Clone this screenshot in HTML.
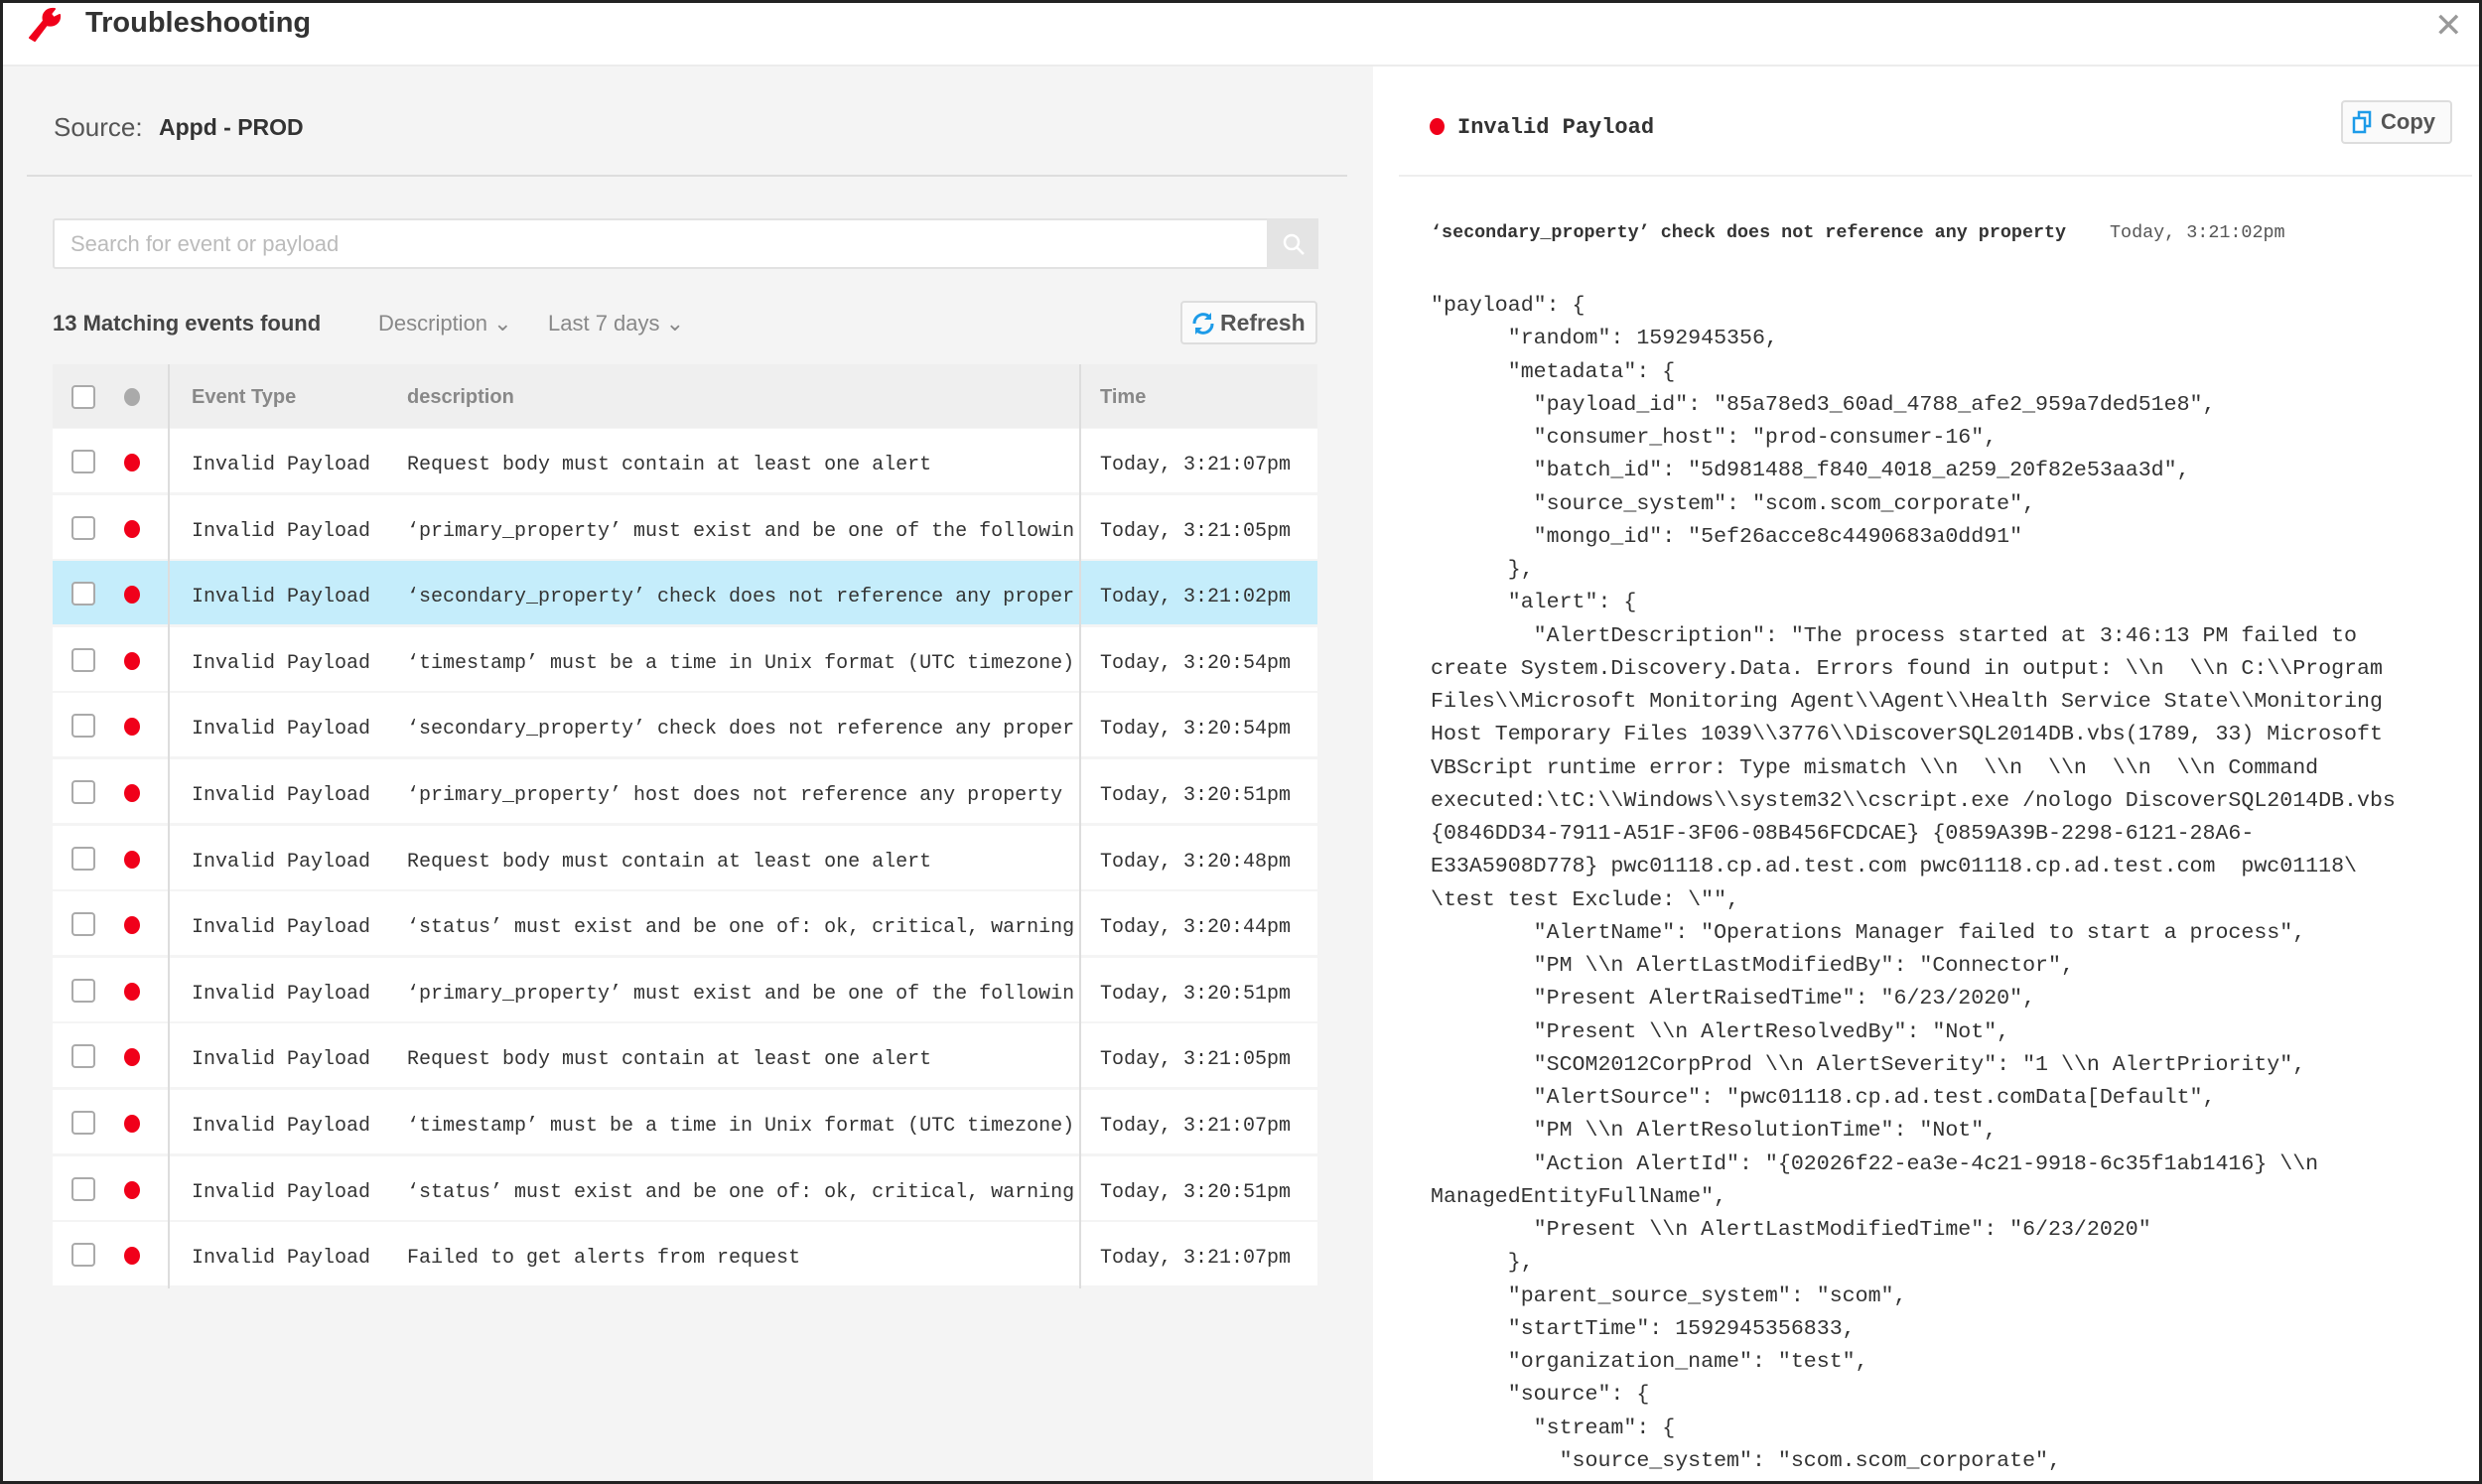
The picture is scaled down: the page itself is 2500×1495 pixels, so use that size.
<!DOCTYPE html>
<html><head><meta charset="utf-8"><style>
*{margin:0;padding:0;box-sizing:border-box}
body{width:2500px;height:1495px;position:relative;overflow:hidden;background:#fff;font-family:"Liberation Sans",sans-serif;color:#333}
.frame{position:absolute;left:0;top:0;width:2500px;height:1495px;border:3px solid #222;pointer-events:none;z-index:10}
.a{position:absolute;white-space:pre}
.mono{font-family:"Liberation Mono",monospace}
.hdr{position:absolute;left:0;top:0;width:2500px;height:67px;border-bottom:2px solid #ececec;background:#fff}
.left{position:absolute;left:0;top:67px;width:1383px;height:1428px;background:#f4f4f4}
.row{position:absolute;left:53px;width:1274px;height:64px;background:#fff}
.cb{position:absolute;left:72px;width:24px;height:24px;border:2px solid #aaa;border-radius:4px;background:#fff}
.dot{position:absolute;width:16px;height:18px;border-radius:50%;background:#f0001a}
.cell{position:absolute;font-family:"Liberation Mono",monospace;font-size:20px;color:#333;white-space:pre;overflow:hidden}
pre{font-family:"Liberation Mono",monospace;font-size:21.6px;line-height:33.25px;color:#333}
</style></head><body>
<div class="hdr"></div>
<svg class="a" style="left:26px;top:6px" width="40" height="36" viewBox="0 0 40 36"><path d="M4 32 L18 15 C16 8 21 2 29 3 L25 8 L28 12 L34 9 C35 17 28 21 21 19 L9 35 Z" fill="#f0001a" stroke="#f0001a" stroke-width="2" stroke-linejoin="round"/></svg>
<div class="a" style="left:86px;top:7px;font-size:29px;font-weight:bold;color:#333">Troubleshooting</div>
<div class="a" style="left:2452px;top:6px;font-size:34px;color:#999;font-weight:300">✕</div>
<div class="left"></div>
<div class="a" style="left:54px;top:113px;font-size:26px;color:#555">Source:</div>
<div class="a" style="left:160px;top:115px;font-size:23px;font-weight:bold;color:#333">Appd - PROD</div>
<div class="a" style="left:27px;top:176px;width:1330px;height:2px;background:#ddd"></div>
<div class="a" style="left:53px;top:220px;width:1275px;height:51px;background:#fff;border:2px solid #e2e2e2;border-radius:3px"></div>
<div class="a" style="left:1276px;top:220px;width:52px;height:51px;background:#e4e4e4"></div>
<svg class="a" style="left:1290px;top:233px" width="26" height="26" viewBox="0 0 26 26"><circle cx="11" cy="11" r="7" fill="none" stroke="#fff" stroke-width="2.5"/><path d="M16 16 L23 23" stroke="#fff" stroke-width="2.5"/></svg>
<div class="a" style="left:71px;top:233px;font-size:22px;color:#bbb">Search for event or payload</div>
<div class="a" style="left:53px;top:313px;font-size:22px;font-weight:bold;color:#444">13 Matching events found</div>
<div class="a" style="left:381px;top:313px;font-size:22px;color:#888">Description ⌄</div>
<div class="a" style="left:552px;top:313px;font-size:22px;color:#888">Last 7 days ⌄</div>
<div class="a" style="left:1189px;top:303px;width:138px;height:44px;background:#fafafa;border:2px solid #ddd;border-radius:4px"></div>
<svg class="a" style="left:1199px;top:313px" width="26" height="26" viewBox="0 0 26 26"><path d="M4 13 A9 9 0 0 1 20 7" fill="none" stroke="#1d9be8" stroke-width="3"/><path d="M22 13 A9 9 0 0 1 6 19" fill="none" stroke="#1d9be8" stroke-width="3"/><path d="M21 2 L21 9 L14 9 Z" fill="#1d9be8"/><path d="M5 24 L5 17 L12 17 Z" fill="#1d9be8"/></svg>
<div class="a" style="left:1229px;top:312px;font-size:23px;font-weight:bold;color:#555">Refresh</div>
<div class="a" style="left:53px;top:367px;width:1274px;height:64px;background:#efefef"></div>
<div class="cb" style="top:388px;background:#fff"></div>
<div class="dot" style="left:125px;top:391px;background:#aaa"></div>
<div class="a" style="left:193px;top:389px;font-size:20px;font-weight:bold;color:#888">Event Type</div>
<div class="a" style="left:410px;top:389px;font-size:20px;font-weight:bold;color:#888">description</div>
<div class="a" style="left:1108px;top:389px;font-size:20px;font-weight:bold;color:#888">Time</div>
<div id="rows"></div>
<div class="a" style="left:169px;top:367px;width:2px;height:931px;background:#ddd;z-index:2"></div>
<div class="a" style="left:1087px;top:367px;width:2px;height:931px;background:#ddd;z-index:2"></div>
<script>
var d=[["Request body must contain at least one alert","Today, 3:21:07pm"],["‘primary_property’ must exist and be one of the followin","Today, 3:21:05pm"],["‘secondary_property’ check does not reference any proper","Today, 3:21:02pm"],["‘timestamp’ must be a time in Unix format (UTC timezone)","Today, 3:20:54pm"],["‘secondary_property’ check does not reference any proper","Today, 3:20:54pm"],["‘primary_property’ host does not reference any property","Today, 3:20:51pm"],["Request body must contain at least one alert","Today, 3:20:48pm"],["‘status’ must exist and be one of: ok, critical, warning","Today, 3:20:44pm"],["‘primary_property’ must exist and be one of the followin","Today, 3:20:51pm"],["Request body must contain at least one alert","Today, 3:21:05pm"],["‘timestamp’ must be a time in Unix format (UTC timezone)","Today, 3:21:07pm"],["‘status’ must exist and be one of: ok, critical, warning","Today, 3:20:51pm"],["Failed to get alerts from request","Today, 3:21:07pm"]];
var h="";for(var i=0;i<13;i++){var t=432+i*66.6;var c=t+33;
h+='<div class="row" style="top:'+t+'px;'+(i==2?'background:#c5edfb':'')+'"></div>';
h+='<div class="cb" style="top:'+(c-12)+'px"></div><div class="dot" style="left:125px;top:'+(c-8)+'px"></div>';
h+='<div class="cell" style="left:193px;top:'+(c-8)+'px">Invalid Payload</div>';
h+='<div class="cell" style="left:410px;top:'+(c-8)+'px;width:676px">'+d[i][0]+'</div>';
h+='<div class="cell" style="left:1108px;top:'+(c-8)+'px">'+d[i][1]+'</div>';}
document.getElementById('rows').innerHTML=h;
</script>
<div class="dot a" style="left:1440px;top:119px;width:15px;height:17px"></div>
<div class="a mono" style="left:1468px;top:116px;font-size:22px;font-weight:bold;color:#333">Invalid Payload</div>
<div class="a" style="left:2358px;top:101px;width:112px;height:44px;background:#fafafa;border:2px solid #ddd;border-radius:4px"></div>
<svg class="a" style="left:2369px;top:111px" width="22" height="24" viewBox="0 0 22 24"><rect x="7" y="2" width="11" height="14" fill="none" stroke="#1d9be8" stroke-width="2.5"/><rect x="2" y="8" width="11" height="14" fill="#fff" stroke="#1d9be8" stroke-width="2.5"/></svg>
<div class="a" style="left:2398px;top:110px;font-size:22px;font-weight:bold;color:#555">Copy</div>
<div class="a" style="left:1409px;top:176px;width:1081px;height:2px;background:#eee"></div>
<div class="a mono" style="left:1441px;top:224px;font-size:18.4px;font-weight:bold;color:#333">‘secondary_property’ check does not reference any property</div>
<div class="a mono" style="left:2125px;top:224px;font-size:18.4px;color:#555">Today, 3:21:02pm</div>
<pre class="a" style="left:1441px;top:292px">"payload": {
      "random": 1592945356,
      "metadata": {
        "payload_id": "85a78ed3_60ad_4788_afe2_959a7ded51e8",
        "consumer_host": "prod-consumer-16",
        "batch_id": "5d981488_f840_4018_a259_20f82e53aa3d",
        "source_system": "scom.scom_corporate",
        "mongo_id": "5ef26acce8c4490683a0dd91"
      },
      "alert": {
        "AlertDescription": "The process started at 3:46:13 PM failed to
create System.Discovery.Data. Errors found in output: \\n  \\n C:\\Program
Files\\Microsoft Monitoring Agent\\Agent\\Health Service State\\Monitoring
Host Temporary Files 1039\\3776\\DiscoverSQL2014DB.vbs(1789, 33) Microsoft
VBScript runtime error: Type mismatch \\n  \\n  \\n  \\n  \\n Command
executed:\tC:\\Windows\\system32\\cscript.exe /nologo DiscoverSQL2014DB.vbs
{0846DD34-7911-A51F-3F06-08B456FCDCAE} {0859A39B-2298-6121-28A6-
E33A5908D778} pwc01118.cp.ad.test.com pwc01118.cp.ad.test.com  pwc01118\
\test test Exclude: \"",
        "AlertName": "Operations Manager failed to start a process",
        "PM \\n AlertLastModifiedBy": "Connector",
        "Present AlertRaisedTime": "6/23/2020",
        "Present \\n AlertResolvedBy": "Not",
        "SCOM2012CorpProd \\n AlertSeverity": "1 \\n AlertPriority",
        "AlertSource": "pwc01118.cp.ad.test.comData[Default",
        "PM \\n AlertResolutionTime": "Not",
        "Action AlertId": "{02026f22-ea3e-4c21-9918-6c35f1ab1416} \\n
ManagedEntityFullName",
        "Present \\n AlertLastModifiedTime": "6/23/2020"
      },
      "parent_source_system": "scom",
      "startTime": 1592945356833,
      "organization_name": "test",
      "source": {
        "stream": {
          "source_system": "scom.scom_corporate",</pre>
<div class="frame"></div>
</body></html>
